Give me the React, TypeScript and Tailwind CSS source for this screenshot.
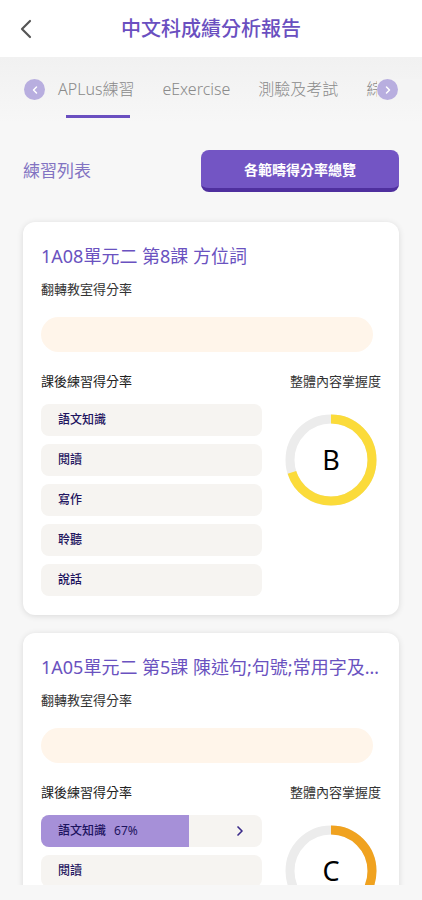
import { ChevronLeft, ChevronRight } from 'lucide-react'

const font = { fontFamily: '"Noto Sans", "Noto Sans CJK TC", sans-serif' }

// 圓環
function Ring({ grade, percent, color }: { grade: string; percent: number; color: string }) {
  const r = 41
  const c = 2 * Math.PI * r
  return (
    <div className="relative w-[92px] h-[92px]">
      <svg width="92" height="92" viewBox="0 0 92 92" className="-rotate-90">
        <circle cx="46" cy="46" r={r} fill="none" stroke="#ececec" strokeWidth="9" />
        <circle
          cx="46"
          cy="46"
          r={r}
          fill="none"
          stroke={color}
          strokeWidth="9"
          strokeDasharray={`${(c * percent) / 100} ${c}`}
        />
      </svg>
      <div className="absolute inset-0 flex items-center justify-center text-[27px] text-black" style={font}>
        {grade}
      </div>
    </div>
  )
}

type Row = { label: string; pct?: number }

function ReportCard({ title, rows, grade, percent, color }: { title: string; rows: Row[]; grade: string; percent: number; color: string }) {
  return (
    <div className="bg-white rounded-xl shadow-[0_1px_6px_rgba(0,0,0,0.12)] px-[18px] pt-[22px] pb-[19px]">
      <div className="text-[18px] leading-6 text-[#6a52c0] truncate">{title}</div>
      <div className="mt-[11px] text-[13px] leading-5 text-[#333]">翻轉教室得分率</div>
      <div className="mt-[18px] mr-[8px] h-[35px] rounded-full bg-[#fff5ea]" />
      <div className="mt-[19px] flex justify-between">
        <div className="w-[221px]">
          <div className="text-[13px] leading-5 text-[#222]">課後練習得分率</div>
          <div className="mt-[13px] flex flex-col gap-[8px]">
            {rows.map((row) => (
              <div key={row.label} className="relative h-[32px] rounded-lg bg-[#f6f4f1] overflow-hidden">
                {row.pct !== undefined && (
                  <div className="absolute inset-y-0 left-0 bg-[#a690d8]" style={{ width: `${row.pct}%` }} />
                )}
                <div className="relative flex h-full items-center justify-between pl-[17px] pr-[14px]">
                  <span className="text-[12px] font-medium text-[#1e1460]">
                    {row.label}
                    {row.pct !== undefined && <span className="ml-[8px] font-normal">{row.pct}%</span>}
                  </span>
                  {row.pct !== undefined && <ChevronRight className="h-4 w-4 text-[#3a2a8a]" strokeWidth={2.5} />}
                </div>
              </div>
            ))}
          </div>
        </div>
        <div className="flex flex-col items-end">
          <div className="text-[13px] leading-5 text-[#333]">整體內容掌握度</div>
          <div className="mt-[23px] mr-[4px]">
            <Ring grade={grade} percent={percent} color={color} />
          </div>
        </div>
      </div>
    </div>
  )
}

export default function App() {
  return (
    <div className="w-[422px] h-[900px] overflow-hidden bg-[#f7f7f7] flex flex-col" style={font}>
      {/* 頂部 */}
      <div className="h-[57px] bg-white flex items-center relative shrink-0">
        <ChevronLeft className="absolute left-[10px] h-8 w-8 text-[#555]" strokeWidth={1.6} />
        <div className="w-full text-center text-[20px] text-[#6a4fc0] font-medium">中文科成績分析報告</div>
      </div>

      {/* 分頁 */}
      <div className="h-[66px] bg-gradient-to-b from-[#f1f1f1] to-[#f7f7f7] relative shrink-0 overflow-hidden">
        <div className="flex items-center h-[64px] pl-[58px] gap-[28px] text-[16px] font-light text-[#8a8a8a] whitespace-nowrap">
          <div className="relative h-full flex items-center">
            APLus練習
            <div className="absolute bottom-[3px] left-[8px] w-[64px] h-[3px] bg-[#6a4fc0]" />
          </div>
          <div>eExercise</div>
          <div>測驗及考試</div>
          <div>綜合</div>
        </div>
        <div className="absolute left-[24px] top-[22px] h-[21px] w-[21px] rounded-full bg-[#b8aedf] flex items-center justify-center">
          <ChevronLeft className="h-3 w-3 text-white" strokeWidth={3} />
        </div>
        <div className="absolute left-[377px] top-[22px] h-[21px] w-[45px] bg-[#f4f4f4]" />
        <div className="absolute left-[377px] top-[22px] h-[21px] w-[21px] rounded-full bg-[#b8aedf] flex items-center justify-center">
          <ChevronRight className="h-3 w-3 text-white" strokeWidth={3} />
        </div>
      </div>

      <div className="h-[762px] overflow-hidden shrink-0">
        <div className="flex items-center justify-between pl-[23px] pr-[23px] pt-[27px]">
          <div className="text-[17px] text-[#8273c2]">練習列表</div>
          <button className="w-[198px] h-[42px] rounded-lg bg-[#7355c4] border-b-[4px] border-[#4f2f9e] text-white text-[14px] font-bold">
            各範疇得分率總覽
          </button>
        </div>

        <div className="px-[23px] mt-[30px] flex flex-col gap-[18px]">
          <ReportCard
            title="1A08單元二 第8課 方位詞"
            rows={[{ label: '語文知識' }, { label: '閱讀' }, { label: '寫作' }, { label: '聆聽' }, { label: '說話' }]}
            grade="B"
            percent={70}
            color="#fbdb3a"
          />
          <ReportCard
            title="1A05單元二 第5課 陳述句;句號;常用字及詞語"
            rows={[{ label: '語文知識', pct: 67 }, { label: '閱讀' }, { label: '寫作' }, { label: '聆聽' }, { label: '說話' }]}
            grade="C"
            percent={50}
            color="#f0a21f"
          />
        </div>
      </div>
    </div>
  )
}
